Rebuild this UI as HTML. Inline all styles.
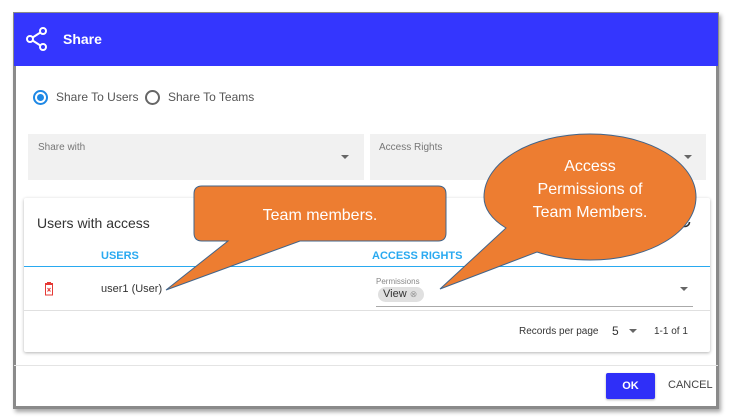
<!DOCTYPE html>
<html><head><style>
*{margin:0;padding:0;box-sizing:border-box}
body{width:731px;height:420px;background:#fff;position:relative;overflow:hidden;font-family:"Liberation Sans",sans-serif}
.a{position:absolute}
.dlg{left:13px;top:12px;width:706px;height:397px;border:3px solid #8a8a8a;box-shadow:2px 3px 4px rgba(0,0,0,.35);background:#fff}
.hdr{left:14px;top:13px;width:704px;height:53px;background:#3436fe}
.t{color:#555;font-size:12px}
.fld{background:#f1f1f1;height:46px;top:134px}
.lbl{font-size:10px;color:#777}
.arr{width:0;height:0;border-left:4px solid transparent;border-right:4px solid transparent;border-top:4px solid #666}
.card{left:24px;top:198px;width:686px;height:154px;background:#fff;box-shadow:0 1px 3px rgba(0,0,0,.3);border-radius:2px}
.th{color:#29a9f0;font-size:11px;font-weight:bold}
</style></head><body>
<div class="a dlg"></div>
<div class="a hdr"></div>
<svg class="a" style="left:26px;top:27px" width="22" height="24" viewBox="0 0 22 24"><g fill="none" stroke="#fff" stroke-width="2"><circle cx="17" cy="4" r="3"/><circle cx="4" cy="12" r="3"/><circle cx="17" cy="20" r="3"/><path d="M6.6 10.5L14.4 5.5M6.6 13.5L14.4 18.5"/></g></svg>
<div class="a" style="left:63px;top:31px;color:#fff;font-size:14px;font-weight:bold">Share</div>

<div class="a" style="left:33px;top:90px;width:15px;height:15px;border:2px solid #1e88e5;border-radius:50%"></div>
<div class="a" style="left:37px;top:94px;width:7px;height:7px;background:#1e88e5;border-radius:50%"></div>
<div class="a t" style="left:56px;top:90px">Share To Users</div>
<div class="a" style="left:145px;top:90px;width:15px;height:15px;border:2px solid #666;border-radius:50%"></div>
<div class="a t" style="left:168px;top:90px">Share To Teams</div>

<div class="a fld" style="left:28px;width:336px"></div>
<div class="a lbl" style="left:38px;top:142px">Share with</div>
<div class="a arr" style="left:341px;top:155px"></div>
<div class="a fld" style="left:370px;width:336px"></div>
<div class="a lbl" style="left:379px;top:142px">Access Rights</div>
<div class="a arr" style="left:684px;top:155px"></div>

<div class="a card"></div>
<div class="a" style="left:37px;top:215px;font-size:14px;color:#333">Users with access</div>
<svg class="a" style="left:678px;top:215px" width="14" height="14" viewBox="0 0 14 14"><path d="M11.5 7A4.5 4.5 0 1 1 10 3.6" fill="none" stroke="#333" stroke-width="1.6"/><path d="M8 1.5L12 2L11 5.8Z" fill="#333"/></svg>
<div class="a th" style="left:101px;top:250px">USERS</div>
<div class="a th" style="left:372px;top:250px">ACCESS RIGHTS</div>
<div class="a" style="left:24px;top:266px;width:686px;height:1px;background:#29a9f0"></div>
<svg class="a" style="left:44px;top:282px" width="10" height="14" viewBox="0 0 10 14"><g fill="none" stroke="#e53935" stroke-width="1"><path d="M1 1.5H9M3.5 1.5V0.5H6.5V1.5"/><rect x="1.5" y="2.5" width="7" height="10.5"/><path d="M3.5 6L6.5 9.5M6.5 6L3.5 9.5"/></g></svg>
<div class="a" style="left:101px;top:283px;font-size:11px;color:#333">user1 (User)</div>
<div class="a" style="left:376px;top:277px;font-size:8px;color:#888">Permissions</div>
<div class="a" style="left:378px;top:287px;width:46px;height:15px;background:#e0e0e0;border-radius:8px;font-size:11px;color:#333;padding:1px 0 0 5px">View <span style="font-size:9px;color:#999">⊗</span></div>
<div class="a" style="left:376px;top:306px;width:317px;height:1px;background:#aaa"></div>
<div class="a arr" style="left:680px;top:287px"></div>
<div class="a" style="left:24px;top:310px;width:686px;height:1px;background:#e0e0e0"></div>
<div class="a" style="left:519px;top:326px;font-size:10px;color:#333">Records per page</div>
<div class="a" style="left:612px;top:324px;font-size:12px;color:#333">5</div>
<div class="a arr" style="left:629px;top:329px"></div>
<div class="a" style="left:654px;top:326px;font-size:10px;color:#333">1-1 of 1</div>
<div class="a" style="left:14px;top:365px;width:704px;height:1px;background:#e4e4e4"></div>
<div class="a" style="left:606px;top:373px;width:49px;height:26px;background:#2f2ff8;border-radius:2px;color:#fff;font-size:11px;font-weight:bold;text-align:center;line-height:26px;box-shadow:0 1px 2px rgba(0,0,0,.3)">OK</div>
<div class="a" style="left:668px;top:379px;font-size:11px;color:#444">CANCEL</div>

<svg class="a" style="left:0;top:0" width="731" height="420">
<path d="M202 186H438Q446 186 446 194V233Q446 241 438 241H300L166 290L228 241H202Q194 241 194 233V194Q194 186 202 186Z" fill="#ed7d31" stroke="#41648a" stroke-width="1"/>
<path d="M590 134C649 134 696 162 696 197C696 232 649 260 590 260C570 260 552 257 537 252L440 289L506 228C491 219 484 208 484 197C484 162 531 134 590 134Z" fill="#ed7d31" stroke="#41648a" stroke-width="1"/>
<g fill="#fff" font-family="Liberation Sans,sans-serif" font-size="16" text-anchor="middle">
<text x="320" y="220">Team members.</text>
<text x="590" y="171">Access</text>
<text x="590" y="194">Permissions of</text>
<text x="590" y="217">Team Members.</text>
</g></svg>
</body></html>
